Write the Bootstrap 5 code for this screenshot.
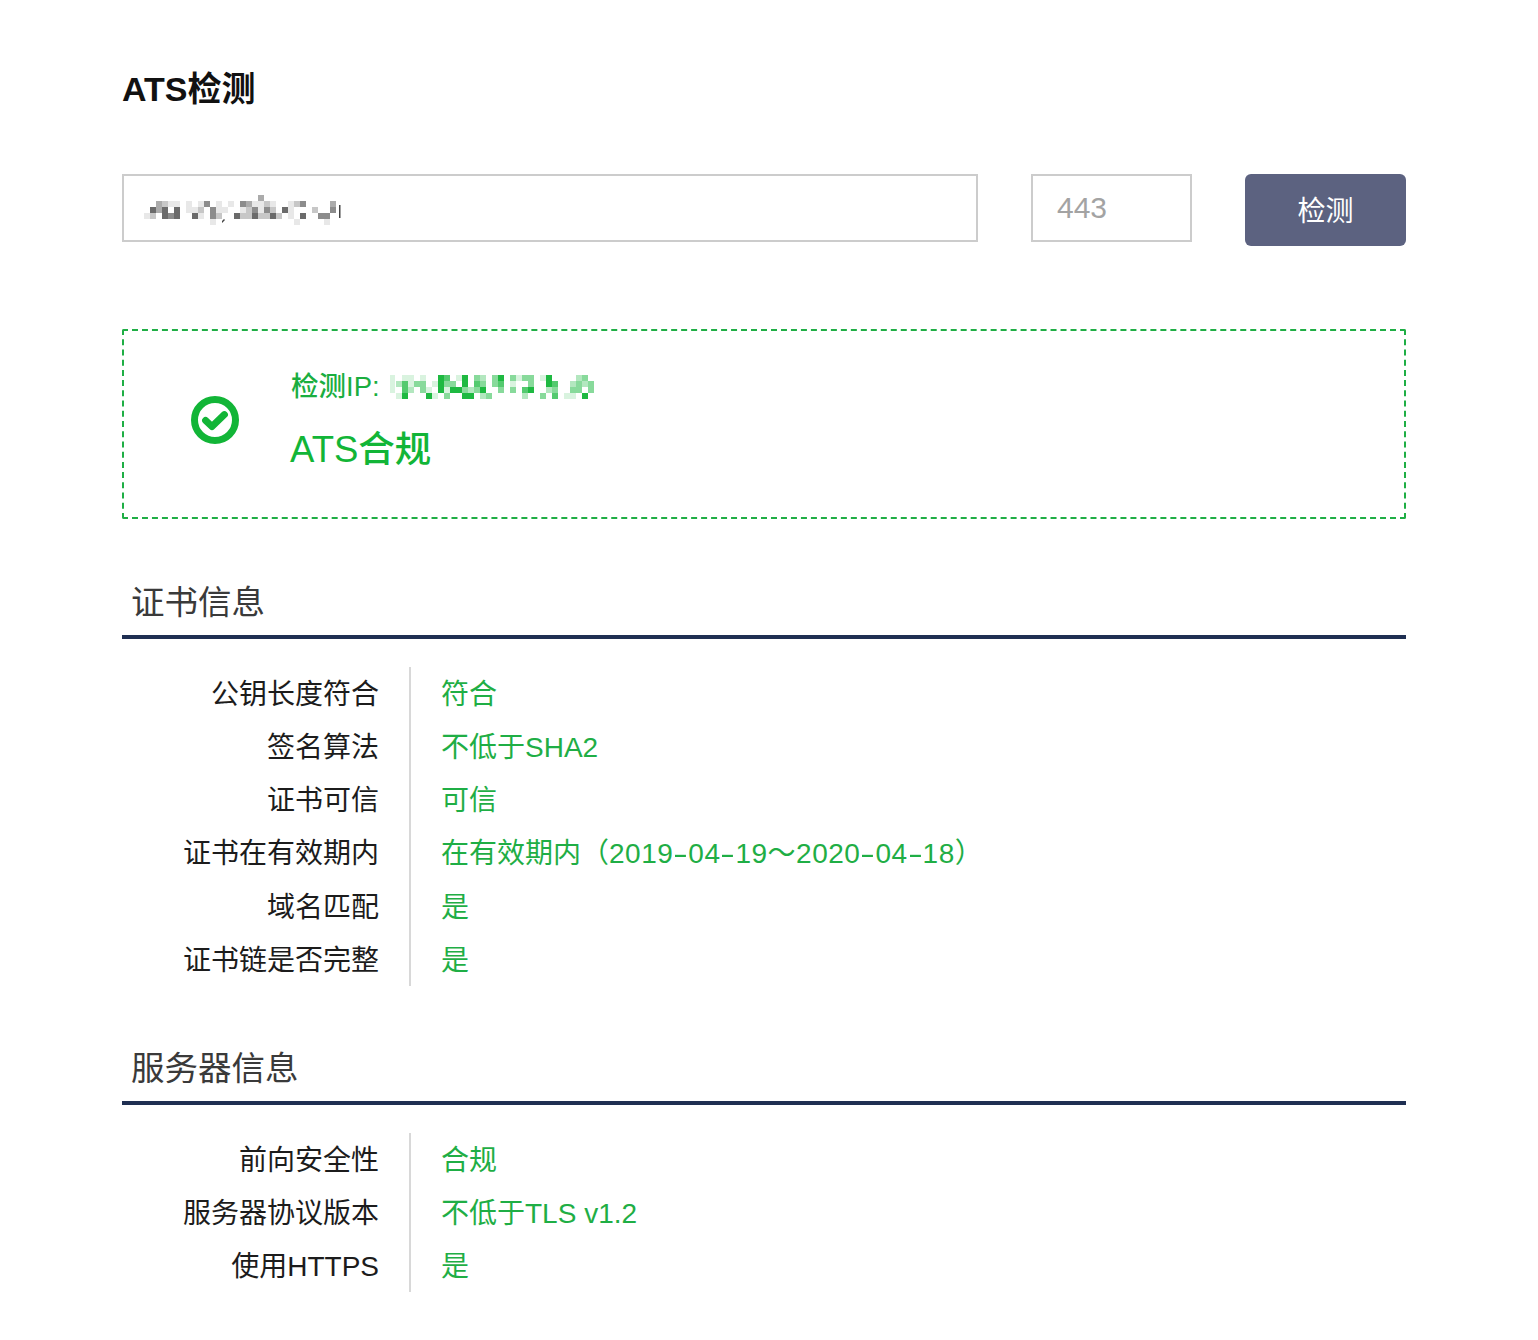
<!DOCTYPE html>
<html lang="zh">
<head>
<meta charset="utf-8">
<title>ATS检测</title>
<link href="https://cdn.jsdelivr.net/npm/bootstrap@5.3.0/dist/css/bootstrap.min.css" rel="stylesheet">
<style>
body{font-family:"Liberation Sans","Noto Sans CJK SC",sans-serif;color:#222;background:#fff}
.page-wrap{width:1284px;margin-left:122px;padding-top:66px}
.page-title{font-size:34px;line-height:46px;font-weight:600;color:#111;margin:0 0 62px}
.check-form{gap:53px;margin-bottom:83px}
.field-host{flex:1;height:68px;border:2px solid #ccc;padding-left:20px;padding-top:3px}
.field-port{width:161px;height:68px;border:2px solid #ccc;padding-left:24px;font-size:30px;line-height:1;color:#a3a3a3}
.check-btn{width:161px;height:72px;background:#5c6280;border:0;border-radius:6px;color:#fff;font-size:28px;padding-top:4px}
.result-box{height:190px;border:2px dashed #1fae45;border-radius:2px;color:#12b537;margin-bottom:59px}
.result-icon{width:167px;padding-left:15px;padding-bottom:8px}
.result-text{padding-bottom:5px}
.result-ip{font-size:27.5px;line-height:38px;margin-bottom:18px;color:#1aae3f;font-weight:500}
.result-main{font-size:36.5px;line-height:52px;font-weight:500;margin-left:-1px}
.mosaic{display:block;filter:blur(.45px)}
.ip-mosaic{margin-left:10px}
.sec-head{font-size:33.5px;line-height:50px;font-weight:400;color:#3a3a3a;padding-left:9px;padding-bottom:7px;border-bottom:4px solid #1f2f52;margin:0 0 28px}
.info-list{margin:0 0 58px}
.info-row{font-size:28px;line-height:56px;height:53.17px}
.info-key{width:289px;padding-right:30px;border-right:2px solid #d8d8d8;text-align:right;color:#1c1c1c;font-weight:400;margin:0}
.info-val{padding-left:30px;color:#1fae45;margin:0}
.date-range{letter-spacing:.5px}
.date-dash{display:inline-block;width:15px;text-align:center;transform:scaleX(1.6);letter-spacing:0}
</style>
</head>
<body>
<main class="page-wrap">
<h1 class="page-title">ATS检测</h1>
<div class="d-flex align-items-start check-form">
  <div class="field-host d-flex align-items-center">
    <svg class="mosaic" width="204" height="30" viewBox="0 0 204 30" aria-hidden="true">
      <path fill="#000" opacity=".09" d="M24 6h12v6H24zM42 6h6v6h-6zM54 6h6v6h-6zM72 6h6v6h-6zM84 6h6v6h-6zM108 6h12v6h-12zM126 6h6v6h-6zM144 6h6v6h-6zM42 12h12v6H42zM72 12h12v6H72zM96 12h6v6h-6zM114 12h6v6h-6zM144 12h6v6h-6zM0 18h6v6H0zM54 18h6v6h-6zM144 18h6v6h-6zM66 24h6v6h-6zM150 24h6v6h-6zM180 24h6v6h-6z"/>
      <path fill="#000" opacity=".22" d="M18 6h6v6h-6zM120 6h6v6h-6zM150 6h6v6h-6zM54 12h6v6h-6zM102 12h6v6h-6zM126 12h6v6h-6zM168 12h6v6h-6zM6 18h6v6H6zM72 18h6v6h-6zM96 18h12v6H96zM114 18h12v6h-12zM132 18h6v6h-6z"/>
      <path fill="#000" opacity=".33" d="M114 0h6v6h-6zM12 6h6v6h-6zM102 6h6v6h-6zM186 6h6v6h-6zM12 12h6v6h-6z"/>
      <path fill="#000" opacity=".45" d="M60 6h6v6h-6zM96 6h6v6h-6zM156 6h6v6h-6zM66 12h6v6h-6zM108 12h6v6h-6zM120 12h6v6h-6zM186 12h6v6h-6zM24 18h6v6h-6zM66 18h6v6h-6zM174 18h12v6h-12z"/>
      <path fill="#000" opacity=".58" d="M6 12h6v6H6zM18 12h6v6h-6zM30 12h6v6h-6zM138 12h6v6h-6zM18 18h6v6h-6zM30 18h6v6h-6zM48 18h6v6h-6zM90 18h6v6h-6zM108 18h6v6h-6zM126 18h6v6h-6zM156 18h6v6h-6z"/>
      <path fill="#444" d="M195 10h1.5v13H195zM78 26l2-2 1 1-3 3z"/>
    </svg>
  </div>
  <div class="field-port d-flex align-items-center">443</div>
  <button type="button" class="check-btn">检测</button>
</div>
<section class="result-box d-flex align-items-center">
  <div class="result-icon d-flex justify-content-center">
    <svg width="48" height="48" viewBox="0 0 48 48" aria-hidden="true"><circle cx="24" cy="24" r="20.5" fill="none" stroke="#12b537" stroke-width="7"/><path d="M14.6 24.4l6.4 6.2L33.4 18.6" fill="none" stroke="#12b537" stroke-width="7" stroke-linejoin="round" stroke-linecap="round"/></svg>
  </div>
  <div class="result-text">
    <div class="result-ip d-flex align-items-center"><span>检测IP:</span>
      <svg class="mosaic ip-mosaic" width="204" height="24" viewBox="0 0 204 24" aria-hidden="true">
        <path fill="#12b537" opacity=".16" d="M0 0h5v18H0zM30 0h6v6h-6zM66 0h6v6h-6zM150 0h6v6h-6zM12 0h12v6H12zM126 0h6v6h-6zM18 6h6v6h-6zM42 6h6v6h-6zM120 6h6v6h-6zM36 12h6v6h-6zM54 12h6v6h-6zM6 18h6v6H6zM42 18h6v6h-6zM174 18h12v6h-12z"/>
        <path fill="#12b537" opacity=".32" d="M90 0h6v6h-6zM186 0h6v6h-6zM6 6h6v6H6zM180 6h6v6h-6zM192 6h6v6h-6zM18 12h6v6h-6zM78 12h6v6h-6zM156 12h6v6h-6zM90 18h6v6h-6zM132 18h6v6h-6z"/>
        <path fill="#12b537" opacity=".5" d="M84 0h6v6h-6zM102 0h6v6h-6zM120 0h6v6h-6zM132 0h12v6h-12zM192 0h6v6h-6zM24 6h12v6H24zM54 6h12v6H54zM90 6h6v6h-6zM102 6h6v6h-6zM138 6h6v6h-6zM186 6h6v6h-6zM198 6h6v6h-6zM30 12h6v6h-6zM72 12h6v6h-6zM84 12h6v6h-6zM108 12h6v6h-6zM120 12h6v6h-6zM162 12h6v6h-6zM180 12h12v6h-12zM198 12h6v6h-6zM54 18h6v6h-6zM96 18h6v6h-6zM150 18h6v6h-6z"/>
        <path fill="#12b537" opacity=".72" d="M54 0h6v6h-6zM12 6h6v6h-6zM84 6h6v6h-6zM108 6h6v6h-6zM162 6h6v6h-6zM12 12h6v6h-6zM132 12h6v6h-6zM162 18h6v6h-6z"/>
        <path fill="#12b537" opacity=".95" d="M48 0h6v6h-6zM72 0h6v6h-6zM108 0h6v6h-6zM156 0h6v6h-6zM48 6h6v6h-6zM72 6h6v6h-6zM156 6h6v6h-6zM48 12h6v6h-6zM60 12h12v6H60zM90 12h6v6h-6zM138 12h6v6h-6zM12 18h6v6h-6zM36 18h6v6h-6zM72 18h12v6H72zM192 18h6v6h-6z"/>
      </svg>
    </div>
    <div class="result-main">ATS合规</div>
  </div>
</section>
<h2 class="sec-head">证书信息</h2>
<dl class="info-list">
  <div class="info-row d-flex"><dt class="info-key">公钥长度符合</dt><dd class="info-val">符合</dd></div>
  <div class="info-row d-flex"><dt class="info-key">签名算法</dt><dd class="info-val">不低于SHA2</dd></div>
  <div class="info-row d-flex"><dt class="info-key">证书可信</dt><dd class="info-val">可信</dd></div>
  <div class="info-row d-flex"><dt class="info-key">证书在有效期内</dt><dd class="info-val">在有效期内（<span class="date-range">2019<span class="date-dash">-</span>04<span class="date-dash">-</span>19～2020<span class="date-dash">-</span>04<span class="date-dash">-</span>18</span>）</dd></div>
  <div class="info-row d-flex"><dt class="info-key">域名匹配</dt><dd class="info-val">是</dd></div>
  <div class="info-row d-flex"><dt class="info-key">证书链是否完整</dt><dd class="info-val">是</dd></div>
</dl>
<h2 class="sec-head">服务器信息</h2>
<dl class="info-list">
  <div class="info-row d-flex"><dt class="info-key">前向安全性</dt><dd class="info-val">合规</dd></div>
  <div class="info-row d-flex"><dt class="info-key">服务器协议版本</dt><dd class="info-val">不低于TLS v1.2</dd></div>
  <div class="info-row d-flex"><dt class="info-key">使用HTTPS</dt><dd class="info-val">是</dd></div>
</dl>
</main>
<script src="https://cdn.jsdelivr.net/npm/bootstrap@5.3.0/dist/js/bootstrap.bundle.min.js"></script>
</body>
</html>
